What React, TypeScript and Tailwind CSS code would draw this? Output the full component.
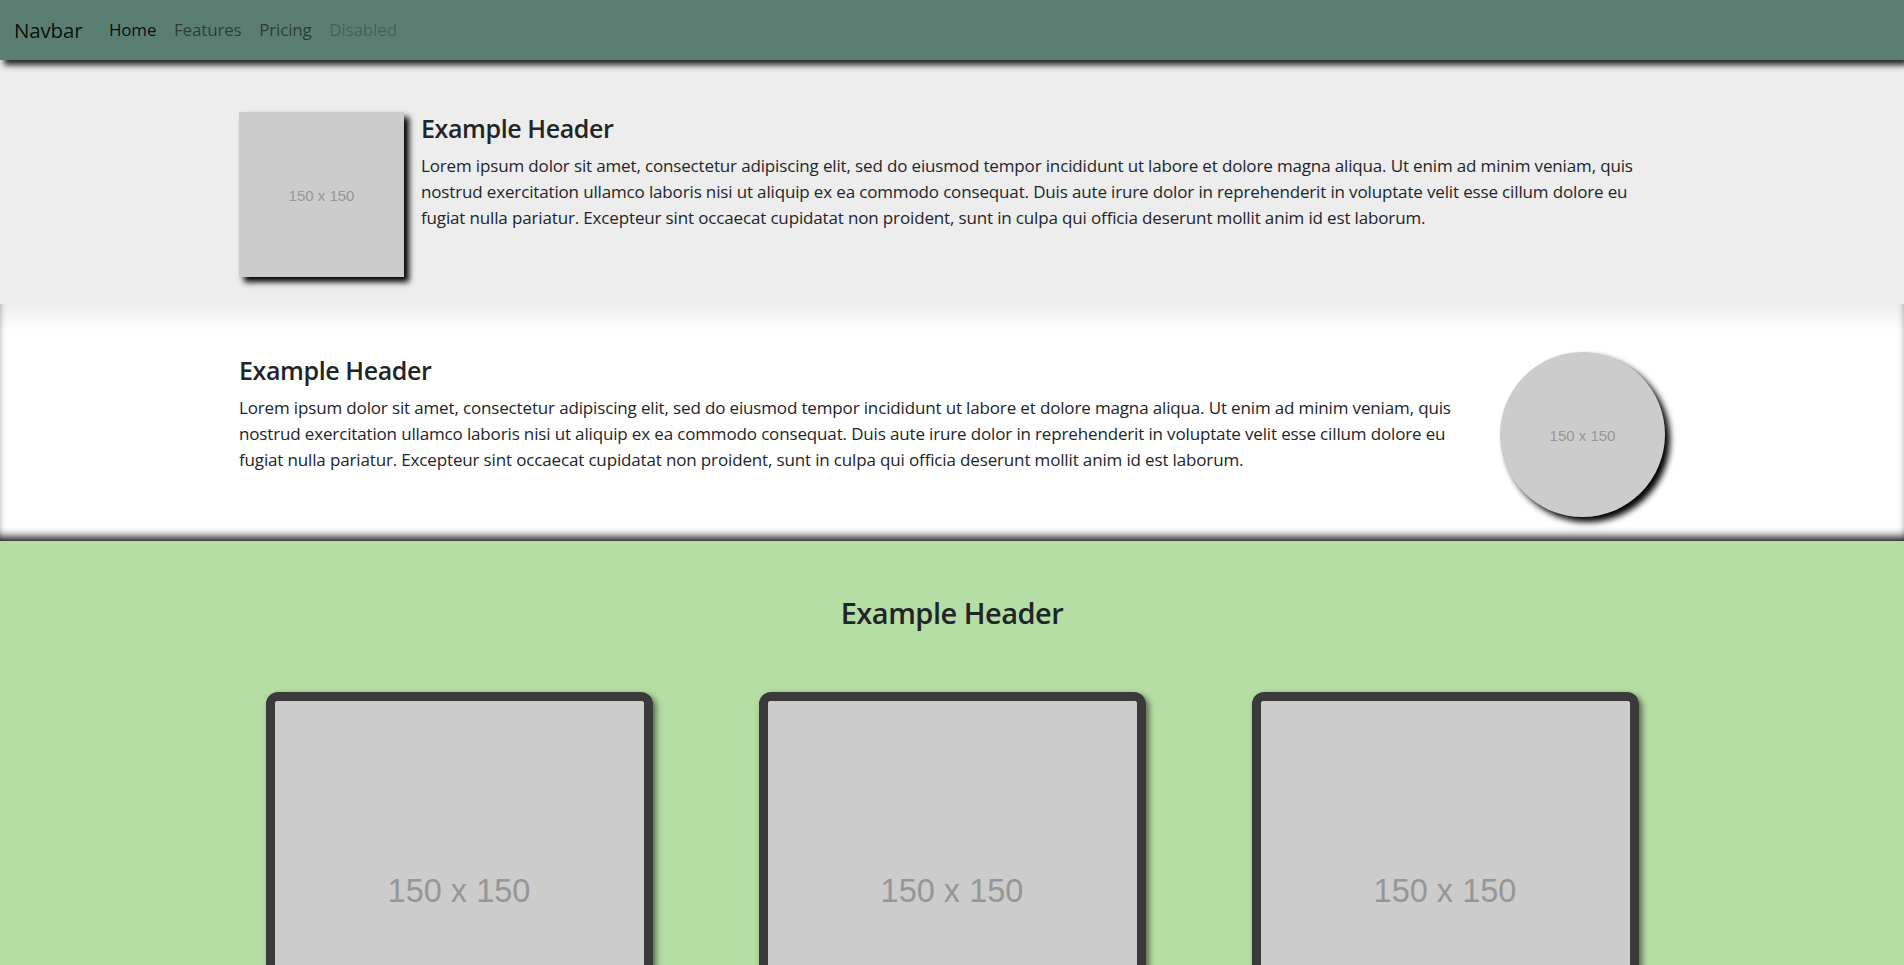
import type { JSX } from 'react';

const LOREM =
  'Lorem ipsum dolor sit amet, consectetur adipiscing elit, sed do eiusmod tempor incididunt ut labore et dolore magna aliqua. Ut enim ad minim veniam, quis nostrud exercitation ullamco laboris nisi ut aliquip ex ea commodo consequat. Duis aute irure dolor in reprehenderit in voluptate velit esse cillum dolore eu fugiat nulla pariatur. Excepteur sint occaecat cupidatat non proident, sunt in culpa qui officia deserunt mollit anim id est laborum.';

function Placeholder({ className }: { className: string }): JSX.Element {
  return (
    <div
      className={
        "flex shrink-0 items-center justify-center bg-[#cccccc] font-['Liberation_Sans',Arial,sans-serif] text-[#969696] " +
        className
      }
    >
      150 x 150
    </div>
  );
}

function TextBlock({ className = '' }: { className?: string }): JSX.Element {
  return (
    <div className={'min-w-0 flex-1 ' + className}>
      <h4 className="mb-[7.8px] pt-[1px] text-[25px] font-semibold leading-[31.7px] tracking-[-0.4px]">
        Example Header
      </h4>
      <p className="text-[17px] leading-[26.4px] tracking-[-0.15px]">{LOREM}</p>
    </div>
  );
}

export default function App(): JSX.Element {
  return (
    <div className="min-h-screen bg-white font-['Open_Sans','Noto_Sans',sans-serif] text-[#212529]">
      {/* Navbar */}
      <nav className="relative z-20 flex h-[60px] items-center bg-[#5a7f72] px-[14px] tracking-[-0.15px] shadow-[4px_5px_6px_rgba(0,0,0,0.85)]">
        <a className="mr-[17.6px] text-[20.5px] text-black/90">Navbar</a>
        <a className="px-[8.8px] text-[17px] text-black/90">Home</a>
        <a className="px-[8.8px] text-[17px] text-black/55">Features</a>
        <a className="px-[8.8px] text-[17px] text-black/55">Pricing</a>
        <a className="px-[8.8px] text-[17px] text-black/25">Disabled</a>
      </nav>

      {/* Media left */}
      <section className="relative z-10 bg-[#ededed] pb-[27px] pt-[52px]">
        <div className="mx-auto flex w-[1426px] gap-[17px]">
          <Placeholder className="h-[165px] w-[165px] pt-[3px] text-[15px] shadow-[5px_5px_6px_#000]" />
          <TextBlock />
        </div>
      </section>

      {/* Media right */}
      <section className="bg-[linear-gradient(to_bottom,#ededed,#ffffff_27px)] pb-[24px] pt-[48px] shadow-[inset_0_-8px_10px_-4px_rgba(0,0,0,0.95)]">
        <div className="mx-auto flex w-[1426px] gap-[17px]">
          <TextBlock className="pt-[2px]" />
          <Placeholder className="h-[165px] w-[165px] rounded-full pt-[3px] text-[15px] shadow-[5px_5px_6px_#000]" />
        </div>
      </section>

      {/* Cards */}
      <section className="bg-[#b5dea5] pb-[60px] pt-[53px]">
        <h3 className="text-center text-[29px] font-semibold leading-[37px] tracking-[-0.5px]">
          Example Header
        </h3>
        <div className="mt-[61px] flex justify-center gap-[106px]">
          {[0, 1, 2].map((i) => (
            <div
              key={i}
              className="w-[387px] rounded-[12px] border-[9px] border-[#3a3a3a] shadow-[3px_3px_6px_rgba(0,0,0,0.55)]"
            >
              <Placeholder className="h-[369px] w-full rounded-[3px] pt-[11px] text-[32.5px]" />
            </div>
          ))}
        </div>
      </section>
    </div>
  );
}
